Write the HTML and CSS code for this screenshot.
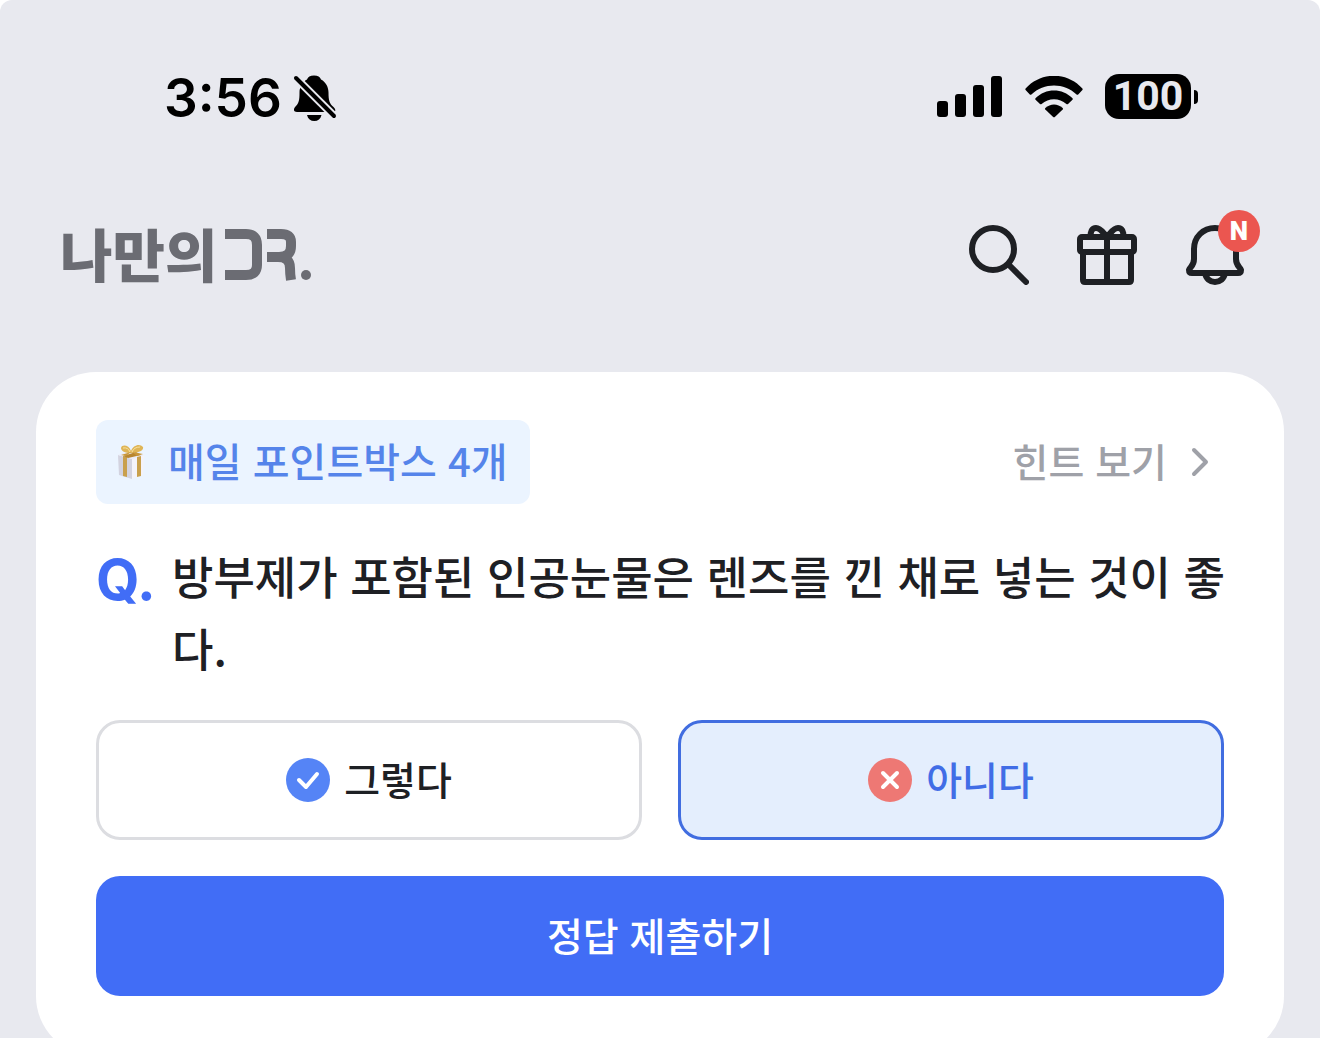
FILE: index.html
```html
<!DOCTYPE html>
<html lang="ko">
<head>
<meta charset="utf-8">
<meta name="viewport" content="width=device-width, initial-scale=1">
<title>나만의DR.</title>
<link rel="stylesheet" href="styles.css">
</head>
<body>
<div class="screen">
  <div class="status">
    <div class="status-left">
      <span class="time">3:56</span>
      <svg class="muted" width="44" height="48" viewBox="0 0 44 48" aria-hidden="true">
        <path d="M21 1.500c4 0 6 1.500 7 4 5 2.500 7.500 8 7.500 13 0 8 1 11 5 14.500 2.500 2.500 2.500 5-.5 5H4c-3.500 0-4-3-1.500-5.500C6 29 6.500 26 6.500 18.500c0-5 2.500-10.500 7.500-13 1-2.500 3-4 7-4z"/>
        <path d="M14 41h14.500c-1 4-3.500 6-7.200 6S15 45 14 41z"/>
        <path d="M0 1L44 45" stroke="#e8e9ef" stroke-width="8"/>
        <path d="M3 4L41 42" stroke="#000" stroke-width="4" stroke-linecap="round"/>
      </svg>
    </div>
    <div class="status-right">
      <svg width="66" height="42" viewBox="0 0 66 42" aria-hidden="true">
        <rect x="0" y="25" width="11" height="16" rx="3"/><rect x="18" y="18" width="11" height="23" rx="3"/><rect x="36" y="9" width="11" height="32" rx="3"/><rect x="54" y="0" width="11" height="41" rx="3"/>
      </svg>
      <svg width="58" height="42" viewBox="0 0 58 42" aria-hidden="true">
        <path d="M.6 12.500C16-4.500 42-4.500 57.400 12.500q.6.800 0 1.500l-4.200 4.500q-.8.700-1.600 0C39 6.500 19 6.500 6.400 18.500q-.8.700-1.600 0L.6 14q-.6-.7 0-1.500z"/>
        <path d="M10.500 22.300c10-10.500 27-10.500 37 0q.7.800 0 1.500L43 28q-.8.700-1.600 0c-7-6.500-17.800-6.500-24.800 0q-.8.700-1.600 0l-4.500-4.200q-.7-.7 0-1.500z"/>
        <path d="M20.300 32c5-4.700 12.400-4.700 17.400 0q.7.800 0 1.500l-7.600 7.300q-1.100 1-2.200 0L20.300 33.500q-.7-.7 0-1.500z"/>
      </svg>
      <div class="battery"><span class="battery-level">100</span><span class="battery-cap"></span></div>
    </div>
  </div>

  <header class="header">
    <h1 class="logo"><a class="logo-link" href="#"><span class="logo-name">나만의</span>
      <svg class="logo-mark" width="88" height="52" viewBox="0 0 88 52" role="img" aria-label="DR.">
        <g fill="none" stroke="#6b6c73" stroke-width="10">
          <path d="M0 5h21q11 0 11 11v20q0 10-11 10H0"/>
          <path d="M42 5h14q10 0 10 8v4q0 11-12 11H42M53 28q12 0 12 11 0 6 1 12"/>
        </g>
        <circle cx="81" cy="46" r="5" fill="#6b6c73"/>
      </svg></a></h1>
    <nav class="actions" aria-label="메뉴">
      <button class="icon-button" type="button" aria-label="검색">
        <svg width="60" height="60" viewBox="0 0 60 60" fill="none" stroke="#1e2024" stroke-width="6" stroke-linecap="round"><circle cx="24" cy="24" r="21"/><path d="M40 40l17 17"/></svg>
      </button>
      <button class="icon-button" type="button" aria-label="선물">
        <svg width="60" height="60" viewBox="0 0 60 60" fill="none" stroke="#1e2024" stroke-width="6" stroke-linejoin="round" stroke-linecap="round"><rect x="3" y="12" width="54" height="15" rx="2"/><path d="M6 28v27q0 2 2 2h44q2 0 2-2V28M30 12v44"/><path d="M14 11c-1-4 1-8 5-8 5 0 7 5 11 9 4-4 6-9 11-9 4 0 6 4 5 8"/></svg>
      </button>
      <button class="icon-button" type="button" aria-label="알림">
        <svg width="60" height="60" viewBox="0 0 60 60" fill="none" stroke="#1e2024" stroke-width="6" stroke-linejoin="round"><path d="M30 3C18 3 9 12 9 24v10c0 7-4 8-5 11q0 3 3 3h46q3 0 3-3c-1-3-5-4-5-11V24C51 12 42 3 30 3z"/><path d="M20 48c1 6 5 9 10 9s9-3 10-9"/></svg>
        <span class="badge">N</span>
      </button>
    </nav>
  </header>

  <main class="card">
    <div class="card-top">
      <div class="points">
        <svg width="26" height="36" viewBox="0 0 26 36" aria-hidden="true">
          <path d="M0 11l14 4v20L1 31z" fill="#d3d3e0"/><path d="M14 15l12-4-1 20-11 4z" fill="#f4f3fa"/>
          <path d="M0 11l12-4 14 4-12 4z" fill="#ecebf3"/>
          <path d="M5 12l4 1v20l-4-1zM19 13l4-1v20l-4 1z" fill="#c9a04d"/>
          <path d="M5 12l13-4 5 3-13 3z" fill="#b8862f"/>
          <path d="M13 9C7 9 3 7 3 4c1-4 8-3 10 3 2-6 9-8 12-4 1 4-5 6-12 6z" fill="#dfb557"/>
          <path d="M13 8L3 11l5 1zM14 8l11 2-6 2z" fill="#c9973a"/>
          <path d="M5 4q5-1 7 4M22 3q-6 0-8 5" fill="none" stroke="#f8e1a0"/>
        </svg>
        <span class="label">매일 포인트박스 4개</span>
      </div>
      <a class="hint" href="#"><span class="label">힌트 보기</span>
        <svg width="18" height="30" viewBox="0 0 18 30" fill="none" stroke="#9fa1a8" stroke-width="4" stroke-linecap="round" stroke-linejoin="round" aria-hidden="true"><path d="M3 3l12 12L3 27"/></svg>
      </a>
    </div>
    <div class="question">
      <span class="question-mark">Q.</span>
      <p class="question-text">방부제가 포함된 인공눈물은 렌즈를 낀 채로 넣는 것이 좋다.</p>
    </div>
    <div class="answers">
      <button class="answer" type="button" aria-pressed="false">
        <svg width="44" height="44" viewBox="0 0 44 44" aria-hidden="true"><circle cx="22" cy="22" r="22" fill="#5584f6"/><path d="M13 22l7 7 11-13" fill="none" stroke="#fff" stroke-width="4" stroke-linecap="round" stroke-linejoin="round"/></svg>
        <span class="label">그렇다</span>
      </button>
      <button class="answer selected" type="button" aria-pressed="true">
        <svg width="44" height="44" viewBox="0 0 44 44" aria-hidden="true"><circle cx="22" cy="22" r="22" fill="#ee7874"/><path d="M15 15l14 14M29 15L15 29" fill="none" stroke="#fff" stroke-width="4" stroke-linecap="round"/></svg>
        <span class="label">아니다</span>
      </button>
    </div>
    <button class="submit" type="button"><span class="label">정답 제출하기</span></button>
  </main>
</div>
</body>
</html>
```
FILE: styles.css
```css
* { box-sizing: border-box; }

body {
  margin: 0;
  background: #fff;
  color: #1e2024;
  font-family: "Noto Sans CJK KR", sans-serif;
  font-weight: 500;
}

svg { display: block; flex: none; }

button {
  margin: 0;
  padding: 0;
  border: 0;
  background: none;
  color: inherit;
  font: inherit;
  cursor: pointer;
}

a { color: inherit; text-decoration: none; }

.screen {
  height: 100vh;
  overflow: hidden;
  border-radius: 12px 12px 0 0;
  background: #e8e9ef;
}

.label { display: block; padding-bottom: 5px; }

.status {
  display: flex;
  align-items: center;
  justify-content: space-between;
  height: 196px;
  padding: 0 122px 0 164px;
  color: #000;
}

.status-left { display: flex; align-items: center; gap: 11px; }
.status-right { display: flex; align-items: center; gap: 22px; padding-bottom: 3px; }

.time {
  font-family: Inter, sans-serif;
  font-size: 53px;
  font-weight: 600;
  line-height: 64px;
}

.battery { display: flex; align-items: center; gap: 3px; }

.battery-level {
  width: 86px;
  border-radius: 14px;
  background: #000;
  color: #e8e9ef;
  font-family: Roboto, sans-serif;
  font-size: 41px;
  font-weight: 700;
  line-height: 45px;
  text-align: center;
}

.battery-cap {
  width: 4px;
  height: 14px;
  border-radius: 0 4px 4px 0;
  background: #000;
}

.header {
  display: flex;
  align-items: center;
  justify-content: space-between;
  height: 118px;
  padding: 0 75px 0 60px;
}

.logo { margin: 0; font-size: 57px; font-weight: 900; line-height: 64px; }
.logo-link { display: flex; align-items: center; gap: 8px; color: #6b6c73; }
.logo-name { padding-bottom: 6px; }

.actions { display: flex; gap: 48px; }
.icon-button { position: relative; width: 60px; height: 60px; }

.badge {
  position: absolute;
  top: -15px;
  right: -15px;
  width: 42px;
  height: 42px;
  border-radius: 50%;
  background: #eb5650;
  color: #fff;
  font-family: Roboto, sans-serif;
  font-size: 26px;
  font-weight: 900;
  line-height: 42px;
  text-align: center;
}

.card {
  margin: 58px 36px 0;
  padding: 48px 60px 60px;
  border-radius: 60px;
  background: #fff;
}

.card-top { display: flex; align-items: center; justify-content: space-between; }

.points {
  display: flex;
  align-items: center;
  gap: 24px;
  height: 84px;
  padding: 0 22px;
  border-radius: 12px;
  background: #ebf4ff;
  color: #5584ea;
  font-size: 40px;
}

.hint {
  display: flex;
  align-items: center;
  gap: 24px;
  padding-right: 15px;
  color: #9fa1a8;
  font-size: 39px;
}

.question { display: flex; margin: 36px -6px 0 0; line-height: 72px; }
.question-mark {
  width: 76px;
  color: #416df6;
  font-family: Inter, sans-serif;
  font-size: 56px;
  font-weight: 700;
  line-height: 80px;
}
.question-text { flex: 1; margin: 0; font-size: 45px; }

.answers { display: grid; grid-template-columns: 1fr 1fr; gap: 36px; margin-top: 36px; }

.answer {
  display: flex;
  align-items: center;
  justify-content: center;
  gap: 14px;
  height: 120px;
  border: 3px solid #dcdde1;
  border-radius: 24px;
  font-size: 39px;
}

.answer.selected {
  border-color: #416de0;
  background: #e4eefd;
  color: #416de6;
}

.submit {
  display: block;
  width: 100%;
  height: 120px;
  margin-top: 36px;
  border-radius: 24px;
  background: #416df6;
  color: #fff;
  font-size: 39px;
}
```
